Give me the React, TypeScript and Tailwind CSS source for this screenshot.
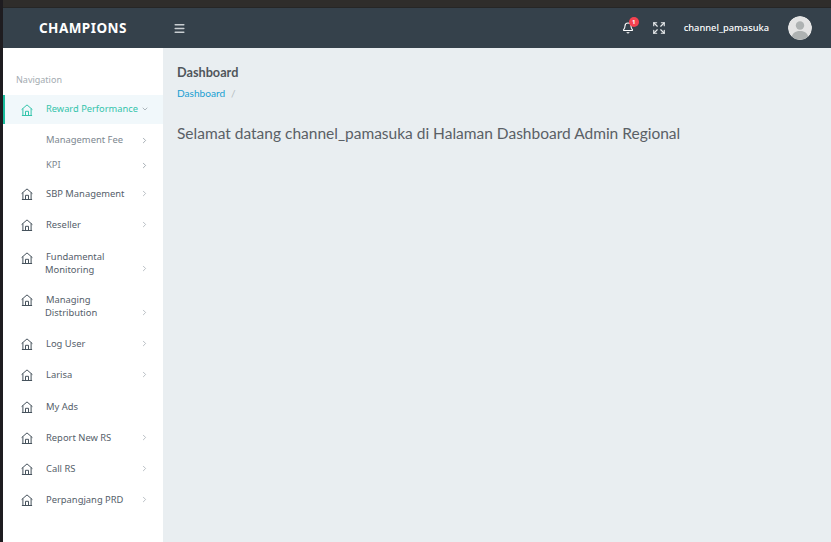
import { Bell, ChevronDown, ChevronRight, Expand, Menu } from 'lucide-react';

type NavItem = { label: string; second?: string; arrow?: boolean; height: string; iconTop?: string };

const navItems: NavItem[] = [
  { label: 'SBP Management', arrow: true, height: 'h-[31px]' },
  { label: 'Reseller', arrow: true, height: 'h-[32px] pb-[1px]' },
  { label: 'Fundamental', second: 'Monitoring', arrow: true, height: 'h-[43px]', iconTop: 'mt-[11px] self-start' },
  { label: 'Managing', second: 'Distribution', arrow: true, height: 'h-[44px]', iconTop: 'mt-[10px] self-start' },
  { label: 'Log User', arrow: true, height: 'h-[31px]' },
  { label: 'Larisa', arrow: true, height: 'h-[31px]' },
  { label: 'My Ads', height: 'h-[32px]' },
  { label: 'Report New RS', arrow: true, height: 'h-[31px]' },
  { label: 'Call RS', arrow: true, height: 'h-[31px]' },
  { label: 'Perpangjang PRD', arrow: true, height: 'h-[31px]' },
];

const HomeIcon = ({ className }: { className?: string }) => (
  <svg viewBox="0 0 12 12" fill="none" stroke="currentColor" strokeWidth="1" className={className}>
    <path d="M0.6 5.6 6 0.9l5.4 4.7" />
    <path d="M1.9 4.6v6.9h8.2V4.6" />
    <path d="M4.5 11.5V7.3h3v4.2" />
    <path d="M0.9 11.5h10.2" />
  </svg>
);

const Avatar = () => (
  <svg viewBox="0 0 24 24" className="h-6 w-6 rounded-full">
    <circle cx="12" cy="12" r="12" fill="#e4e4e4" />
    <circle cx="12" cy="9.5" r="4.2" fill="#aeb2b2" />
    <path d="M3.8 20.5c1-4 4.4-5.6 8.2-5.6s7.2 1.6 8.2 5.6A12 12 0 0 1 3.8 20.5z" fill="#aeb2b2" />
  </svg>
);

export default function App() {
  return (
    <div className="flex h-[542px] w-[831px] overflow-hidden bg-[#23262a] font-['Noto_Sans','Open_Sans',sans-serif]">
      <div className="w-[3px] shrink-0 bg-[#1e1c20]" />
      <div className="flex min-w-0 flex-1 flex-col">
        <div className="h-[8px] shrink-0 border-b border-[#262626] bg-[#2f2d2b]" />
        <header className="flex h-[40px] shrink-0 items-center bg-[#35414b] text-white">
          <div className="w-[160px] shrink-0 pl-[36px] text-[13.5px] font-bold tracking-[0.45px]">CHAMPIONS</div>
          <Menu className="ml-[10px] h-[13px] w-[13px] text-[#c9ced2]" strokeWidth={2.6} />
          <div className="ml-auto flex items-center">
            <span className="relative">
              <Bell className="h-[12px] w-[12px]" strokeWidth={2.2} />
              <span className="absolute -right-[5px] -top-[5px] flex h-[10px] w-[10px] items-center justify-center rounded-full bg-[#f44250] text-[6px] font-bold leading-none">
                1
              </span>
            </span>
            <Expand className="ml-[18px] h-[14px] w-[14px] text-[#e6e9eb]" strokeWidth={2} />
            <span className="ml-[18px] text-[9.3px] font-medium leading-none">channel_pamasuka</span>
            <span className="ml-[19px] mr-[19px] flex">
              <Avatar />
            </span>
          </div>
        </header>
        <div className="flex min-h-0 flex-1">
          <aside className="w-[160px] shrink-0 bg-white pt-[25px]">
            <div className="pl-[13px] text-[9px] leading-[14px] text-[#a3abb1]">Navigation</div>
            <div className="mt-[8px] flex h-[29px] items-center border-l-[2px] border-[#1abc9c] bg-[#f1f8fb] pb-[2px] pl-[16px] text-[#34c4ab]">
              <HomeIcon className="mt-[2px] h-[12px] w-[12px]" />
              <span className="ml-[13px] text-[9.3px] leading-none">Reward Performance</span>
              <ChevronDown className="ml-[3px] h-[8px] w-[8px] text-[#8a949c]" strokeWidth={2} />
            </div>
            <div className="mt-[4px] flex h-[25px] items-center pl-[43px] pr-[14px] text-[9.4px] text-[#7d8790]">
              <span className="flex-1">Management Fee</span>
              <ChevronRight className="h-[9px] w-[9px] text-[#8a949c]" strokeWidth={2} />
            </div>
            <div className="mb-[1px] flex h-[24px] items-center pl-[43px] pr-[14px] text-[9.4px] text-[#7d8790]">
              <span className="flex-1">KPI</span>
              <ChevronRight className="h-[9px] w-[9px] text-[#8a949c]" strokeWidth={2} />
            </div>
            {navItems.map((item) => (
              <div key={item.label} className={`${item.height} flex items-center pl-[18px] pr-[14px] text-[#55606a]`}>
                <HomeIcon className={`h-[12px] w-[12px] shrink-0 text-[#46525c] ${item.iconTop ?? 'mt-[1px]'}`} />
                <div className="ml-[13px] flex-1 text-[9.4px] leading-[13px]">
                  {item.label}
                  {item.second ? <div className="-ml-[1px]">{item.second}</div> : null}
                </div>
                {item.arrow ? (
                  <ChevronRight className={`h-[9px] w-[9px] text-[#a3abb1] ${item.second ? 'mb-[11px] self-end' : ''}`} strokeWidth={2} />
                ) : null}
              </div>
            ))}
          </aside>
          <main className="min-w-0 flex-1 bg-[#e9eef1] pl-[14px] pt-[16px] font-['Lato','Noto_Sans',sans-serif]">
            <h1 className="text-[12.7px] font-bold leading-[17px] text-[#50565c]">Dashboard</h1>
            <div className="mt-[5px] flex items-center text-[10.1px] leading-[14px]">
              <span className="text-[#1a9ed1]">Dashboard</span>
              <span className="ml-[6px] text-[#b4bbc0]">/</span>
            </div>
            <p className="mt-[23px] text-[15.5px] leading-[21px] text-[#5a6066]">
              Selamat datang channel_pamasuka di Halaman Dashboard Admin Regional
            </p>
          </main>
        </div>
      </div>
    </div>
  );
}
